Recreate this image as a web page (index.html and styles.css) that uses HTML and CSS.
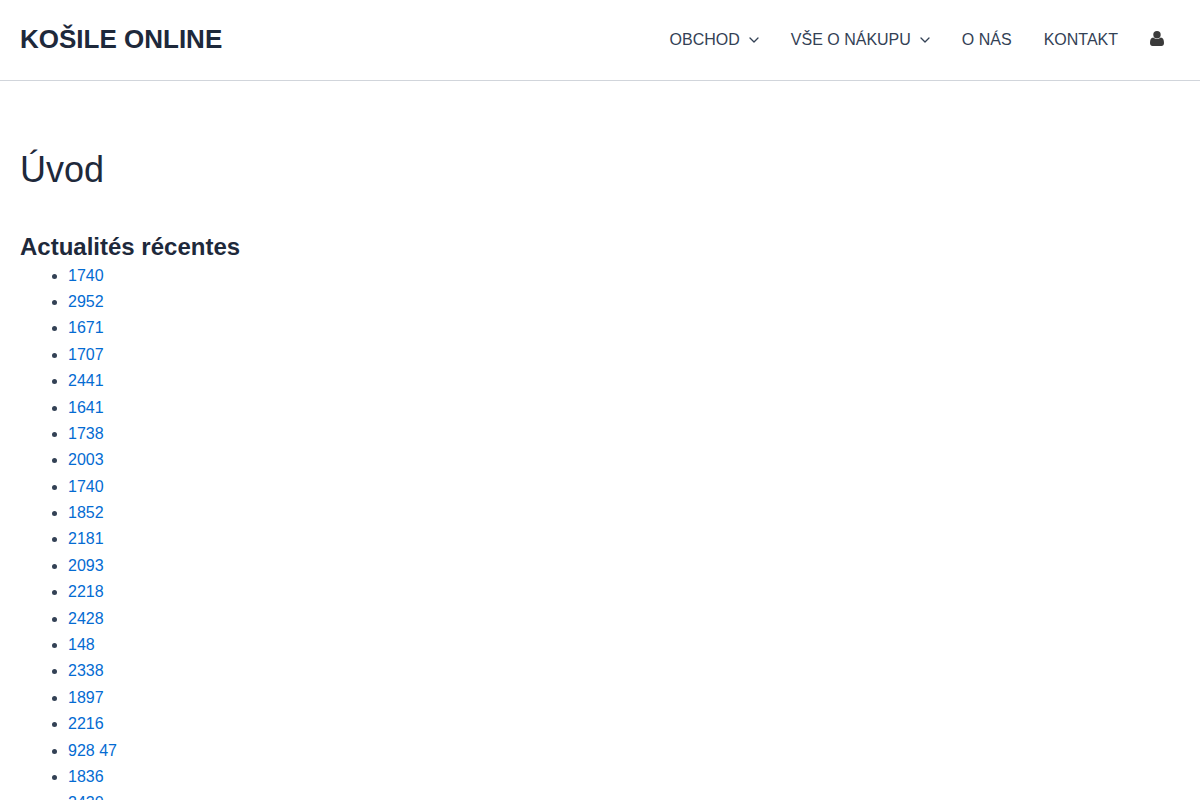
FILE: index.html
```html
<!DOCTYPE html>
<html lang="cs">
	<head>
		<meta charset="UTF-8">
		<meta name="viewport" content="width=device-width, initial-scale=1">
		<title>KOŠILE ONLINE</title>
		<link rel="stylesheet" href="styles.css">
	</head>
	<body>
		<header class="site-header">
			<a href="#" class="site-title">KOŠILE ONLINE</a>
			<nav class="main-nav">
				<ul class="menu">
					<li><a href="#">OBCHOD
						<svg class="arrow" viewBox="0 0 10 6"><path d="M1 1l4 4 4-4"/></svg></a></li>
					<li><a href="#">VŠE O NÁKUPU
						<svg class="arrow" viewBox="0 0 10 6"><path d="M1 1l4 4 4-4"/></svg></a></li>
					<li><a href="#">O NÁS</a></li>
					<li><a href="#">KONTAKT</a></li>
					<li><a href="#" class="account" aria-label="account">
						<svg class="user" viewBox="0 0 14 15"><circle cx="7" cy="3.7" r="3.7"/><path d="M3.2 6.6C1 6.8 0 8.600 0 12c0 2 1 3 2.600 3h8.800C13 15 14 14 14 12c0-3.400-1-5.200-3.200-5.400C9.800 7.500 8.500 8.100 7 8.100S4.200 7.500 3.200 6.600z"/></svg></a></li>
				</ul>
			</nav>
		</header>
		<main class="content">
			<h1>Úvod</h1>
			<h2>Actualités récentes</h2>
			<ul class="posts">
				<li><a href="#">1740</a></li>
				<li><a href="#">2952</a></li>
				<li><a href="#">1671</a></li>
				<li><a href="#">1707</a></li>
				<li><a href="#">2441</a></li>
				<li><a href="#">1641</a></li>
				<li><a href="#">1738</a></li>
				<li><a href="#">2003</a></li>
				<li><a href="#">1740</a></li>
				<li><a href="#">1852</a></li>
				<li><a href="#">2181</a></li>
				<li><a href="#">2093</a></li>
				<li><a href="#">2218</a></li>
				<li><a href="#">2428</a></li>
				<li><a href="#">148</a></li>
				<li><a href="#">2338</a></li>
				<li><a href="#">1897</a></li>
				<li><a href="#">2216</a></li>
				<li><a href="#">928 47</a></li>
				<li><a href="#">1836</a></li>
				<li><a href="#">2430</a></li>
			</ul>
		</main>
	</body>
</html>
```
FILE: styles.css
```css
*{
    box-sizing: border-box;
}
body{
    margin: 0;
    font-family: "Liberation Sans", Arial, sans-serif;
    font-size: 16px;
    line-height: 1.65;
    color: #334155;
    background: #fff;
}
a{
    color: #046bd2;
    text-decoration: none;
}
a:hover{
    color: #045cb4;
}
h1, h2{
    margin: 0;
    color: #1e293b;
}
.site-header{
    display: flex;
    flex-wrap: wrap;
    align-items: center;
    justify-content: space-between;
    min-height: 81px;
    padding: 0 20px;
    border-bottom: 1px solid #d1d5db;
}
.site-title{
    padding-bottom: 2px;
    font-size: 26px;
    font-weight: bold;
    line-height: 32px;
    color: #1e293b;
}
.menu{
    display: flex;
    flex-wrap: wrap;
    margin: 0;
    padding: 0;
    list-style: none;
}
.menu a{
    display: flex;
    align-items: center;
    height: 80px;
    padding: 0 16px;
    color: #334155;
}
.menu .account{
    padding-bottom: 4px;
}
.arrow{
    width: 10px;
    height: 6px;
    margin-left: 9px;
    fill: none;
    stroke: #334155;
    stroke-width: 1.3;
    stroke-linecap: round;
    stroke-linejoin: round;
}
.user{
    width: 14px;
    height: 15px;
    fill: #3a3a3a;
}
.content{
    padding: 64px 20px;
}
h1{
    margin-bottom: 36px;
    font-size: 36px;
    font-weight: normal;
    line-height: 1.4;
}
h2{
    font-size: 24px;
    line-height: 1.3;
}
.posts{
    margin: 0;
    padding-left: 48px;
}
```
